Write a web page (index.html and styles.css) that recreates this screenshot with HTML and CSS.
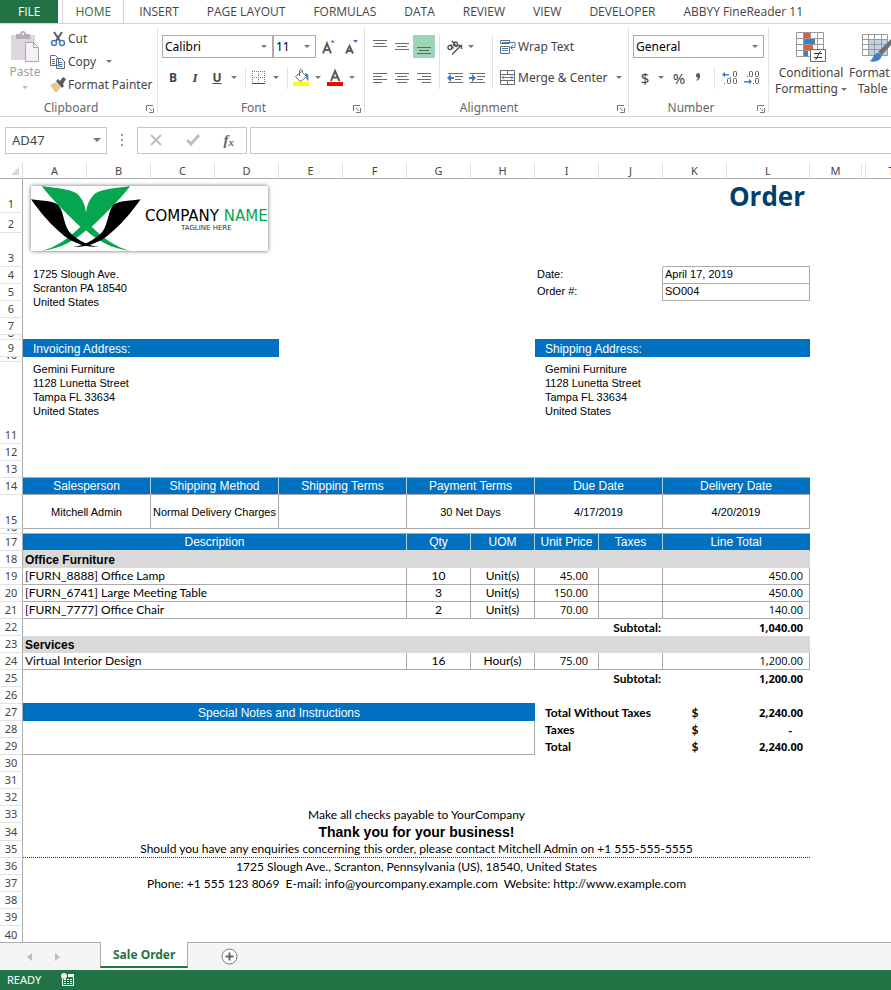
FILE: index.html
```html
<!DOCTYPE html>
<html lang="en">
<head>
<meta charset="utf-8">
<title>Sale Order</title>
<link rel="stylesheet" href="styles.css">
</head>
<body>
<header>
  <nav class="tabs" aria-label="Ribbon tabs">
    <a class="tab file" href="#">FILE</a>
    <a class="tab active" href="#">HOME</a>
    <a class="tab" href="#">INSERT</a>
    <a class="tab" href="#">PAGE LAYOUT</a>
    <a class="tab" href="#">FORMULAS</a>
    <a class="tab" href="#">DATA</a>
    <a class="tab" href="#">REVIEW</a>
    <a class="tab" href="#">VIEW</a>
    <a class="tab" href="#">DEVELOPER</a>
    <a class="tab" href="#">ABBYY FineReader 11</a>
  </nav>

  <div class="ribbon">
    <section class="group clipboard">
      <div class="clip-body">
        <button class="big paste">
          <svg width="30" height="32" viewBox="0 0 30 32"><path fill="#dbd7dc" d="M1 4h24v25H1z"/><path fill="#b3afb4" d="M6 3h4c0-4 6-4 6 0h4v5H6z"/><circle cx="13" cy="3" r="1" fill="#fff"/><path fill="#f5f1f8" stroke="#aaa6ac" d="M15.500 11.500h8l5 5v14h-13z"/><path fill="none" stroke="#aaa6ac" d="M23.500 11.500v5h5"/></svg>
          <span>Paste</span>
          <i class="arrow pale"></i>
        </button>
        <div class="clip-list">
          <button class="cmd"><svg width="16" height="16" viewBox="0 0 16 16"><path stroke="#5b5b5b" stroke-width="2" fill="none" d="M4 1l6 9M12 1L6 10"/><circle cx="4" cy="12" r="2.500" fill="none" stroke="#3f7fbf" stroke-width="1.500"/><circle cx="12" cy="12" r="2.500" fill="none" stroke="#3f7fbf" stroke-width="1.500"/></svg>Cut</button>
          <button class="cmd"><svg width="16" height="16" viewBox="0 0 16 16"><path fill="#fff" stroke="#6a6a6a" d="M.5 1.500h5l3 3v7h-8zM6.500 4.500h5l3 3v7h-8z"/><path stroke="#3f7fbf" d="M2 5.500h3M2 7.500h3M2 9.500h3M8.500 8.500h4M8.500 10.500h4M8.500 12.500h4"/></svg>Copy<i class="arrow gap"></i></button>
          <button class="cmd"><svg width="16" height="16" viewBox="0 0 16 16"><path fill="#eec58b" d="M0 8l6-3 5 5-4 5H5z"/><path fill="#5b5b5b" d="M6 4l2-2 2 2 3-4 3 2-3 5 1 2-2 2z"/></svg>Format Painter</button>
        </div>
      </div>
      <footer class="label">Clipboard<svg class="launch" width="8" height="8" viewBox="0 0 8 8"><path fill="none" stroke="#777" d="M.5 6V.5H7M3 3l3 3M7.500 3v4.500H3"/></svg></footer>
    </section>

    <section class="group font">
      <div class="row">
        <span class="combo family"><select aria-label="Font"><option>Calibri</option></select></span>
        <span class="combo size"><select aria-label="Font size"><option>11</option></select></span>
        <button class="tool" aria-label="Increase font size"><svg width="14" height="16" viewBox="0 0 14 16"><path fill="none" stroke="#5b5b5b" stroke-width="2" d="M1 14.500L5 4.500l4 10M2.500 11h5"/><path fill="#3f7fbf" d="M8.500 3.500l2-2.500 2.500 2.500z"/></svg></button>
        <button class="tool" aria-label="Decrease font size"><svg width="14" height="16" viewBox="0 0 14 16"><path fill="none" stroke="#5b5b5b" stroke-width="2" d="M2 14.500L5.500 7l3.500 7.500M3 12h5"/><path fill="#3f7fbf" d="M9 1h5l-2.500 3z"/></svg></button>
      </div>
      <div class="row">
        <button class="tool"><b>B</b></button>
        <button class="tool"><em>I</em></button>
        <button class="tool"><u>U</u></button>
        <i class="arrow drop"></i>
        <i class="sep"></i>
        <button class="tool" aria-label="Borders"><svg width="14" height="14" viewBox="0 0 14 14"><path fill="none" stroke="#777" stroke-dasharray="1 1" d="M0 .5h13M.5 0v13M6.500 0v13M12.500 0v13M0 6.500h13"/><path stroke="#444" d="M0 12.500h13"/></svg></button>
        <i class="arrow drop"></i>
        <i class="sep"></i>
        <button class="tool" aria-label="Fill color"><svg width="17" height="17" viewBox="0 0 17 17"><path fill="#fff" stroke="#6a6a6a" d="M2.500 7.500l6-5 5 5-5 4.500h-2z"/><path fill="none" stroke="#6a6a6a" d="M6.500 7V2c0-2 3-2 3 0v2"/><path fill="#3f7fbf" d="M12 4c4 0 4 4 3 8-2-1-1-4-3-8z"/><path fill="#ff0" d="M0 13h16v4H0z"/></svg></button>
        <i class="arrow drop"></i>
        <button class="tool" aria-label="Font color"><svg width="17" height="17" viewBox="0 0 17 17"><path fill="none" stroke="#5b5b5b" stroke-width="2" d="M4 12L8 2l4.500 10M5 8.500h6"/><path fill="#f00" d="M0 13h16v4H0z"/></svg></button>
        <i class="arrow drop"></i>
      </div>
      <footer class="label">Font<svg class="launch" width="8" height="8" viewBox="0 0 8 8"><path fill="none" stroke="#777" d="M.5 6V.5H7M3 3l3 3M7.500 3v4.500H3"/></svg></footer>
    </section>

    <section class="group align">
      <div class="align-body">
        <div class="stack">
          <div class="row">
            <button class="tool" aria-label="Top align"><svg class="up" width="14" height="10" viewBox="0 0 14 10"><path stroke="#6a6a6a" d="M0 1.500h14M2 4.500h10M0 7.500h14"/></svg></button>
            <button class="tool" aria-label="Middle align"><svg width="14" height="10" viewBox="0 0 14 10"><path stroke="#6a6a6a" d="M0 1.500h14M2 4.500h10M0 7.500h14"/></svg></button>
            <button class="tool on" aria-label="Bottom align"><svg class="down" width="14" height="10" viewBox="0 0 14 10"><path stroke="#5b6b60" d="M0 1.500h14M2 4.500h10M0 7.500h14"/></svg></button>
          </div>
          <div class="row">
            <button class="tool" aria-label="Align left"><svg width="14" height="12" viewBox="0 0 14 12"><path stroke="#6a6a6a" d="M0 1.500h14M0 4.500h9M0 7.500h14M0 10.500h9"/></svg></button>
            <button class="tool" aria-label="Center"><svg width="14" height="12" viewBox="0 0 14 12"><path stroke="#6a6a6a" d="M0 1.500h14M2 4.500h10M0 7.500h14M2 10.500h10"/></svg></button>
            <button class="tool" aria-label="Align right"><svg width="14" height="12" viewBox="0 0 14 12"><path stroke="#6a6a6a" d="M0 1.500h14M5 4.500h9M0 7.500h14M5 10.500h9"/></svg></button>
          </div>
        </div>
        <div class="stack side">
          <div class="row">
            <button class="tool" aria-label="Orientation"><svg width="18" height="16" viewBox="0 0 18 16"><g fill="none" stroke="#555" stroke-width="1.400"><circle cx="4" cy="8.500" r="2"/><path d="M4.500 5.500l3 4M6 2l5 6"/><circle cx="9.500" cy="5" r="2"/><path d="M6 15.500L15 6.500M11.500 6.500H15.500V10"/></g></svg></button>
            <i class="arrow"></i>
          </div>
          <div class="row">
            <button class="tool" aria-label="Decrease indent"><svg width="16" height="12" viewBox="0 0 16 12"><path stroke="#6a6a6a" d="M1 1.500h15M8 4.500h8M8 7.500h6M1 10.500h15"/><path fill="#3f7fbf" d="M0 6l4-4v3h3v2H4v3z"/></svg></button>
            <button class="tool" aria-label="Increase indent"><svg width="16" height="12" viewBox="0 0 16 12"><path stroke="#6a6a6a" d="M1 1.500h15M8 4.500h8M8 7.500h6M1 10.500h15"/><path fill="#3f7fbf" d="M7 6L3 2v3H0v2h3v3z"/></svg></button>
          </div>
        </div>
        <div class="stack side wide">
          <div class="row"><button class="cmd"><svg width="16" height="16" viewBox="0 0 16 16"><path fill="#fff" stroke="#6a6a6a" d="M.5 1.500h9v3h-9zM.5 7.500h9v7h-9z"/><path fill="none" stroke="#3f7fbf" d="M2 3.500h13v5h-4M13 6l-2.500 2.500L13 11M2 9.500h6M2 11.500h6"/></svg>Wrap Text</button></div>
          <div class="row"><button class="cmd"><svg width="16" height="16" viewBox="0 0 16 16"><path fill="#fff" stroke="#6a6a6a" d="M.5 .5h14v14H.5zM.5 4.500h14M.5 10.500h14M7.500 .5v4M7.500 10.500v4"/><path fill="none" stroke="#3f7fbf" d="M2 7.500h11M4 5.500l-2 2 2 2M11 5.500l2 2-2 2"/></svg>Merge &amp; Center<i class="arrow gap"></i></button></div>
        </div>
      </div>
      <footer class="label">Alignment<svg class="launch" width="8" height="8" viewBox="0 0 8 8"><path fill="none" stroke="#777" d="M.5 6V.5H7M3 3l3 3M7.500 3v4.500H3"/></svg></footer>
    </section>

    <section class="group number">
      <div class="row"><span class="combo format"><select aria-label="Number format"><option>General</option></select></span></div>
      <div class="row">
        <button class="tool glyph">$</button>
        <i class="arrow drop"></i>
        <button class="tool glyph">%</button>
        <button class="tool glyph" aria-label="Comma style"><svg width="8" height="10" viewBox="0 0 8 10"><path fill="#5b5b5b" d="M3 0c3 0 3 6-1 8L1.500 7C3 6 3 5 2.500 4.500 0 4 1 0 3 0z"/></svg></button>
        <i class="sep"></i>
        <button class="tool" aria-label="Increase decimal"><svg width="16" height="14" viewBox="0 0 16 14"><path fill="#3f7fbf" d="M0 3.500L3 1v2h4v1.500H3v2z"/><g fill="none" stroke="#5b5b5b"><path d="M8 6h1M2 12.500h1"/><rect x="11.500" y=".5" width="3" height="5" rx="1"/><rect x="5.500" y="7.500" width="3" height="5" rx="1"/><rect x="11.500" y="7.500" width="3" height="5" rx="1"/></g></svg></button>
        <button class="tool" aria-label="Decrease decimal"><svg width="16" height="14" viewBox="0 0 16 14"><path fill="#3f7fbf" d="M8 10.500L5 8v2H0v1.500h5v2z"/><g fill="none" stroke="#5b5b5b"><path d="M3 5.500h1M9 12.500h1"/><rect x="5.500" y=".5" width="3" height="5" rx="1"/><rect x="11.500" y=".5" width="3" height="5" rx="1"/><rect x="11.500" y="7.500" width="3" height="5" rx="1"/></g></svg></button>
      </div>
      <footer class="label">Number<svg class="launch" width="8" height="8" viewBox="0 0 8 8"><path fill="none" stroke="#777" d="M.5 6V.5H7M3 3l3 3M7.500 3v4.500H3"/></svg></footer>
    </section>

    <section class="group styles">
      <button class="big">
        <svg width="30" height="32" viewBox="0 0 30 32"><path fill="#fff" stroke="#9a9a9a" d="M.5 1.500h27v24H.5zM.5 7.500h27M.5 13.500h27M.5 19.500h27M7.500 1.500v24M14.500 1.500v24M21.500 1.500v24"/><path fill="#d95f3e" d="M8 2h6v5H8zM8 14h9v5H8z"/><path fill="#3f7fbf" d="M8 8h11v5H8zM8 20h4v5H8z"/><path fill="#fff" stroke="#6a6a6a" d="M14.500 18.500h15v12h-15z"/><path stroke="#333" fill="none" d="M18 22.500h8M18 26.500h8M24.500 20l-5 9"/></svg>
        <span>Conditional</span><span>Formatting<i class="arrow"></i></span>
      </button>
      <button class="big">
        <svg width="30" height="32" viewBox="0 0 30 32"><path fill="#fff" stroke="#9a9a9a" d="M.5 3.500h25v21H.5z"/><path fill="#bdd3ea" d="M7 9h18v15H7z"/><path fill="none" stroke="#9a9a9a" d="M.5 8.500h25M.5 13.500h25M.5 18.500h25M6.500 3.500v21M12.500 3.500v21M19.500 3.500v21"/><path fill="#707070" d="M29 8v6l-9 10-4-3z"/><path fill="#3f7fbf" d="M7 30c4 0 4-8 9-8 5 1 4 5 1 7-3 2-6 2-10 1z"/></svg>
        <span>Format as</span><span>Table<i class="arrow"></i></span>
      </button>
    </section>
  </div>
</header>

<div class="formula">
  <span class="namebox"><input aria-label="Name box" value="AD47"><i class="arrow large"></i></span>
  <svg width="2" height="12" viewBox="0 0 2 12"><path fill="#999" d="M0 0h2v2H0zM0 5h2v2H0zM0 10h2v2H0z"/></svg>
  <div class="fx">
    <button aria-label="Cancel"><svg width="12" height="12" viewBox="0 0 12 12"><path stroke="#bfbfbf" stroke-width="2" d="M1 1l10 10M11 1L1 11"/></svg></button>
    <button aria-label="Enter"><svg width="14" height="12" viewBox="0 0 14 12"><path fill="none" stroke="#bfbfbf" stroke-width="3" d="M1 6l4 4 8-9"/></svg></button>
    <button class="fn" aria-label="Insert function">f<small>x</small></button>
  </div>
  <input class="entry" aria-label="Formula">
</div>

<main class="sheet">
<table>
  <colgroup><col class="c-num"><col class="c"><col class="c"><col class="c"><col class="c"><col class="c"><col class="c"><col class="c"><col class="c"><col class="c"><col class="c"><col class="c"><col class="c-l"><col class="c-m"><col class="c-hid"><col class="c-m"><col></colgroup>
  <thead>
    <tr><th class="corner"><svg width="8" height="8" viewBox="0 0 8 8"><path fill="#d9d9d9" d="M8 0v8H0z"/></svg></th><th>A</th><th>B</th><th>C</th><th>D</th><th>E</th><th>F</th><th>G</th><th>H</th><th>I</th><th>J</th><th>K</th><th>L</th><th>M</th><th></th><th>T</th><th></th></tr>
  </thead>
  <tbody>
    <tr class="h34"><th>1</th>
      <td colspan="8" rowspan="3" class="top">
        <div class="logo">
          <svg width="110" height="65" viewBox="0 0 330 195"><path fill="#06a650" d="M32 0C90 8 128 10 143 28 158 45 163 62 165 82 167 62 172 45 187 28 202 10 240 8 298 0 260 48 215 92 182 122 215 155 255 184 298 194 240 190 195 160 165 133 135 160 90 190 32 194 75 184 115 155 148 122 115 92 70 48 32 0Z"/><path id="leaf" d="M0 40C50 46 72 46 84 60 100 80 98 125 122 145 142 162 170 180 202 183 165 184 130 172 100 150 60 118 28 80 0 40Z"/><use href="#leaf" transform="matrix(-1 0 0 1 329 0)"/></svg>
          <div class="brand"><div>COMPANY <span>NAME</span></div><small>TAGLINE HERE</small></div>
        </div>
      </td>
      <td colspan="4" class="title">Order</td></tr>
    <tr class="h20"><th>2</th></tr>
    <tr class="h34"><th>3</th><td colspan="2"></td><td colspan="2" class="bb"></td></tr>
    <tr><th>4</th><td colspan="8" rowspan="4" class="addr">1725 Slough Ave.<br>Scranton PA 18540<br>United States</td><td colspan="2" class="br sm">Date:</td><td colspan="2" class="bb br sm">April 17, 2019</td></tr>
    <tr><th>5</th><td colspan="2" class="br sm">Order #:</td><td colspan="2" class="bb br sm">SO004</td></tr>
    <tr><th>6</th></tr>
    <tr><th>7</th></tr>
    <tr class="h5"><th><div>8</div></th><td colspan="4" class="edge"></td><td colspan="4"></td><td colspan="4" class="edge"></td></tr>
    <tr><th>9</th><td colspan="4" class="blue left">Invoicing Address:</td><td colspan="4"></td><td colspan="4" class="blue left">Shipping Address:</td></tr>
    <tr class="h5"><th><div>10</div></th></tr>
    <tr class="h82"><th>11</th><td colspan="8" class="addr">Gemini Furniture<br>1128 Lunetta Street<br>Tampa FL 33634<br>United States</td><td colspan="4" class="addr">Gemini Furniture<br>1128 Lunetta Street<br>Tampa FL 33634<br>United States</td></tr>
    <tr><th>12</th></tr>
    <tr><th>13</th><td colspan="12" class="bb"></td></tr>
    <tr class="split"><th>14</th><td colspan="2" class="blue">Salesperson</td><td colspan="2" class="blue">Shipping Method</td><td colspan="2" class="blue">Shipping Terms</td><td colspan="2" class="blue">Payment Terms</td><td colspan="2" class="blue">Due Date</td><td colspan="2" class="blue">Delivery Date</td></tr>
    <tr class="h34 boxed mid"><th>15</th><td colspan="2">Mitchell Admin</td><td colspan="2">Normal Delivery Charges</td><td colspan="2"></td><td colspan="2">30 Net Days</td><td colspan="2">4/17/2019</td><td colspan="2">4/20/2019</td></tr>
    <tr class="h5"><th><div>16</div></th><td colspan="12" class="bb"></td></tr>
    <tr class="split last"><th>17</th><td colspan="6" class="blue">Description</td><td class="blue">Qty</td><td class="blue">UOM</td><td class="blue">Unit Price</td><td class="blue">Taxes</td><td colspan="2" class="blue">Line Total</td></tr>
    <tr><th>18</th><td colspan="12" class="section">Office Furniture</td></tr>
    <tr class="boxed item"><th>19</th><td colspan="6" class="name">[FURN_8888] Office Lamp</td><td>10</td><td>Unit(s)</td><td class="price">45.00</td><td></td><td colspan="2" class="num">450.00</td></tr>
    <tr class="boxed item"><th>20</th><td colspan="6" class="name">[FURN_6741] Large Meeting Table</td><td>3</td><td>Unit(s)</td><td class="price">150.00</td><td></td><td colspan="2" class="num">450.00</td></tr>
    <tr class="boxed item"><th>21</th><td colspan="6" class="name">[FURN_7777] Office Chair</td><td>2</td><td>Unit(s)</td><td class="price">70.00</td><td></td><td colspan="2" class="num">140.00</td></tr>
    <tr class="total"><th>22</th><td colspan="8"></td><td colspan="2" class="sub">Subtotal:</td><td colspan="2" class="num">1,040.00</td></tr>
    <tr><th>23</th><td colspan="12" class="section">Services</td></tr>
    <tr class="boxed item"><th>24</th><td colspan="6" class="name">Virtual Interior Design</td><td>16</td><td>Hour(s)</td><td class="price">75.00</td><td></td><td colspan="2" class="num">1,200.00</td></tr>
    <tr class="total"><th>25</th><td colspan="8"></td><td colspan="2" class="sub">Subtotal:</td><td colspan="2" class="num">1,200.00</td></tr>
    <tr><th>26</th><td colspan="8" class="edge"></td></tr>
    <tr class="total"><th>27</th><td colspan="8" class="blue">Special Notes and Instructions</td><td colspan="2" class="lead">Total Without Taxes</td><td class="cur">$</td><td class="num">2,240.00</td></tr>
    <tr class="total"><th>28</th><td colspan="8" rowspan="2" class="bb br"></td><td colspan="2" class="lead">Taxes</td><td class="cur">$</td><td class="num dash">-</td></tr>
    <tr class="total"><th>29</th><td colspan="2" class="lead">Total</td><td class="cur">$</td><td class="num">2,240.00</td></tr>
    <tr><th>30</th></tr>
    <tr><th>31</th></tr>
    <tr><th>32</th></tr>
    <tr><th>33</th><td colspan="12" class="foot">Make all checks payable to YourCompany</td></tr>
    <tr class="h18"><th>34</th><td colspan="12" class="thanks">Thank you for your business!</td></tr>
    <tr><th>35</th><td colspan="12" class="foot dots">Should you have any enquiries concerning this order, please contact Mitchell Admin on +1 555-555-5555</td></tr>
    <tr><th>36</th><td colspan="12" class="foot">1725 Slough Ave., Scranton, Pennsylvania (US), 18540, United States</td></tr>
    <tr><th>37</th><td colspan="12" class="foot">Phone: +1 555 123 8069&nbsp; E-mail: info@yourcompany.example.com&nbsp; Website: http://www.example.com</td></tr>
    <tr><th>38</th></tr>
    <tr><th>39</th></tr>
    <tr class="end"><th>40</th></tr>
  </tbody>
</table>
</main>

<nav class="sheets" aria-label="Sheets">
  <button aria-label="Previous sheet"><svg width="5" height="8" viewBox="0 0 5 8"><path fill="#bdbdbd" d="M5 0v8L0 4z"/></svg></button>
  <button aria-label="Next sheet"><svg width="5" height="8" viewBox="0 0 5 8"><path fill="#bdbdbd" d="M0 0v8l5-4z"/></svg></button>
  <a class="current" href="#">Sale Order</a>
  <button class="add" aria-label="New sheet"><svg width="17" height="17" viewBox="0 0 17 17"><circle cx="8.500" cy="8.500" r="7.500" fill="#fff" stroke="#777"/><path stroke="#666" stroke-width="2" d="M4.500 8.500h8M8.500 4.500v8"/></svg></button>
</nav>
<footer class="status">
  <span>READY</span>
  <svg width="14" height="14" viewBox="0 0 14 14"><circle cx="3" cy="3" r="3" fill="#e6f2ea"/><path fill="#fff" d="M7 1h6v3H7z"/><path fill="none" stroke="#fff" d="M1.500 6v6.500h11V4"/><path stroke="#fff" stroke-dasharray="2 1" d="M3 6.500h9M3 8.500h9M3 10.500h9"/></svg>
</footer>
</body>
</html>
```
FILE: styles.css
```css
* { box-sizing: border-box; }

body {
  margin: 0;
  min-height: 100vh;
  display: flex;
  flex-direction: column;
  overflow-x: hidden;
  background: #fff;
  color: #444;
  font: 12px/16px "Noto Sans", "Open Sans", sans-serif;
}

a { color: inherit; text-decoration: none; }
button, input, select { font: inherit; color: inherit; border: 0; padding: 0; margin: 0; background: none; }
button { display: flex; align-items: center; justify-content: center; }
svg { display: block; flex: none; }

/* Ribbon tabs */
.tabs { display: flex; gap: 2px; height: 24px; border-bottom: 1px solid #d4d4d4; white-space: nowrap; overflow: hidden; font-family: "Open Sans", sans-serif; }
.tab { height: 24px; padding: 4px 13px; }
.file { background: #217346; color: #fff; padding: 4px 18px; margin-right: 2px; }
.active { background: #fff; color: #217346; padding: 4px 12px; border: solid #d4d4d4; border-width: 0 1px; }

/* Ribbon */
.ribbon { display: flex; height: 93px; border-bottom: 1px solid #d4d4d4; overflow: hidden; white-space: nowrap; }
.group { position: relative; flex: none; display: flex; flex-direction: column; gap: 8px; padding: 11px 3px 0 4px; }
.group:not(:last-child)::after { content: ""; position: absolute; right: 0; top: 4px; bottom: 4px; border-right: 1px solid #e1e1e1; }
.clipboard { width: 158px; }
.font { width: 207px; }
.align { width: 264px; }
.number { width: 140px; }
.label { position: absolute; left: 0; right: 16px; bottom: 0; text-align: center; color: #666; }
.launch { position: absolute; right: -12px; bottom: 3px; }

.row { display: flex; align-items: center; height: 23px; }
.tool { width: 22px; height: 23px; flex: none; }
.tool b, .tool em, .tool u { font: 700 12px/16px "Open Sans", sans-serif; }
.tool em { font: italic 700 13px/16px "Liberation Serif", serif; }
.on { background: #9fd5b7; }
.up { margin-bottom: 6px; }
.down { margin-top: 8px; }
.glyph { font-size: 15px; }
.sep { height: 22px; border-left: 1px solid #e1e1e1; margin: 0 2px 0 5px; flex: none; }
.number .sep { margin: 0 4px 0 7px; }
.arrow { width: 0; height: 0; flex: none; border: solid transparent; border-width: 3px 3px 0; border-top-color: #777; display: inline-block; vertical-align: middle; }
.arrow.gap { margin-left: 8px; }
.arrow.drop { margin: 0 3px; }
.arrow.pale { border-top-color: #bbb; margin-top: 6px; }
.arrow.large { border-width: 4px 4px 0; }

.combo { position: relative; height: 23px; border: 1px solid #ababab; }
.combo select { width: 100%; height: 21px; padding: 0 2px; appearance: none; color: #000; }
.combo::after { content: ""; position: absolute; right: 5px; top: 9px; border: solid transparent; border-width: 3px 3px 0; border-top-color: #777; }
.family { width: 111px; }
.size { width: 43px; margin-right: 2px; }
.format { width: 131px; }
.number .glyph { width: 24px; }
.number .arrow { margin: 0 3px 0 1px; }
.number .glyph + .glyph { width: 16px; }

.big { flex-direction: column; justify-content: flex-start; line-height: 16px; }
.big .arrow { margin-left: 3px; }
.clip-body { display: flex; gap: 4px; margin-top: -8px; }
.paste { width: 42px; color: #a0a0a0; padding-top: 4px; }
.paste span { margin-top: 1px; }
.big.paste .arrow { margin-left: 0; }
.clip-list { display: flex; flex-direction: column; align-items: flex-start; }
.cmd { height: 23px; gap: 2px; }
.align-body { display: flex; }
.stack { display: flex; flex-direction: column; gap: 8px; }
.side { padding-left: 4px; margin-left: 4px; border-left: 1px solid #e1e1e1; }
.wide { padding-left: 7px; }
.side .arrow { margin-left: 2px; }
.side .cmd .arrow { margin-left: 6px; }
.group.styles { flex-direction: row; align-items: flex-start; gap: 2px; padding: 7px 0 0 6px; }
.styles .big svg { margin-bottom: 2px; }

/* Formula bar */
.formula { display: flex; align-items: center; height: 46px; padding: 0 0 0 5px; }
.namebox { display: flex; align-items: center; width: 102px; height: 27px; border: 1px solid #c6c6c6; padding: 0 5px 0 6px; margin-right: 14px; font-size: 13px; }
.namebox input { flex: 1; min-width: 0; }
.fx { display: flex; align-items: center; justify-content: space-around; width: 110px; height: 27px; margin: 0 3px 0 14px; border: 1px solid #c6c6c6; }
.fn { font: italic 700 15px/20px "Liberation Serif", serif; color: #666; }
.fn small { font-size: 11px; padding-top: 4px; }
.entry { flex: 1; min-width: 0; height: 27px; border: 1px solid #c6c6c6; border-right: 0; }

/* Worksheet */
.sheet { flex: 1; overflow: hidden; color: #000; }
table { table-layout: fixed; width: 100%; min-width: 918px; border-collapse: separate; border-spacing: 0; white-space: nowrap; }
.c-num { width: 23px; }
.c { width: 64px; }
.c-l { width: 83px; }
.c-m { width: 52px; }
.c-hid { width: 4px; }
th { padding: 0; font-weight: 400; color: #444; font-size: 11px; line-height: 16px; }
thead th { height: 16px; line-height: 15px; border-bottom: 1px solid #ababab; border-right: 1px solid #e1e1e1; }
thead th:last-child { border-right: 0; }
.corner svg { margin: 0 0 0 11px; }
tbody th { border-right: 1px solid #ababab; border-bottom: 1px solid #e1e1e1; vertical-align: bottom; }
tbody tr { height: 17px; }
td { padding: 0 2px; line-height: 16px; }
tr.h5 { height: 5px; }
tr.h5 td { line-height: 4px; }
tr.h5 th div { display: flex; align-items: flex-end; justify-content: center; height: 4px; line-height: 13px; overflow: hidden; }
tr.h18 { height: 18px; }
tr.h20 { height: 20px; }
tr.h34 { height: 34px; }
tr.h82 { height: 82px; }
tr.end { height: 16px; }
tr.end th { border-bottom: 0; line-height: 15px; }

.bb { border-bottom: 1px solid #ababab; }
.br { border-right: 1px solid #ababab; }
.edge { border-bottom: 1px solid #0070c0; }
.top { vertical-align: top; padding: 7px 8px 0; }
.title { text-align: right; padding-right: 5px; color: #003f6b; font: 700 26px/32px "Open Sans", sans-serif; }
.sm, .addr, .mid td { font-family: "Liberation Sans", Arial, sans-serif; font-size: 11px; }
.sm { line-height: 14px; vertical-align: top; }
.addr { padding: 0 10px; vertical-align: top; line-height: 14px; }
.blue, .total .blue { background: #0070c0; color: #fff; text-align: center; font: 12px/16px "Liberation Sans", Arial, sans-serif; }
.blue.left { text-align: left; padding-left: 10px; }
.split td { border-right: 1px solid #b4cfe8; border-bottom: 1px solid #ababab; }
.split.last td { border-bottom-color: #d9d9d9; }
.split td:last-child { border-right-color: #0070c0; }
.boxed td { border-right: 1px solid #ababab; border-bottom: 1px solid #ababab; text-align: center; }
.section { background: #d9d9d9; font: 700 12px/16px "Liberation Sans", Arial, sans-serif; }
.item td, .total td, .foot { font-family: Lato, sans-serif; font-size: 12px; }
.item .name { text-align: left; }
.total td { font-weight: 700; }
.total .blue { font-weight: 400; }
.item .num, .total .num, .item .price { font-family: "Open Sans", sans-serif; font-size: 11px; text-align: right; }
.item .num { padding-right: 6px; }
.total .num { padding-right: 7px; }
.item .price { padding-right: 10px; }
.total .sub { text-align: right; }
.total .lead { padding-left: 10px; }
.total .cur { text-align: center; }
.total .dash { padding-right: 18px; }
.foot { text-align: center; }
.dots { border-bottom: 1px dotted #1f3f5f; }
.thanks { text-align: center; font: 700 14px/17px "Liberation Sans", Arial, sans-serif; }

.logo { display: flex; align-items: center; width: 237px; height: 65px; background: #fff; box-shadow: 0 0 4px rgba(0, 0, 0, .6); }
.brand { margin-left: 4px; padding-top: 2px; font: 15px/16px "DejaVu Sans", sans-serif; }
.brand span { color: #06a650; }
.brand small { display: block; text-align: center; font-size: 7px; line-height: 8px; color: #333; }

/* Sheet tabs and status bar */
.sheets { display: flex; align-items: flex-start; height: 28px; background: #f5f5f5; border-top: 1px solid #ababab; padding-left: 15px; }
.sheets button { width: 28px; height: 27px; }
.current { height: 26px; margin: -1px 27px 0 29px; padding: 5px 12px 0; border: solid #ababab; border-width: 0 1px; border-bottom: 2px solid #217346; background: #fff; color: #217346; font-weight: 700; }
.status { display: flex; align-items: center; gap: 20px; height: 20px; padding: 0 7px; background: #217346; color: #fff; font-size: 11px; }
```
